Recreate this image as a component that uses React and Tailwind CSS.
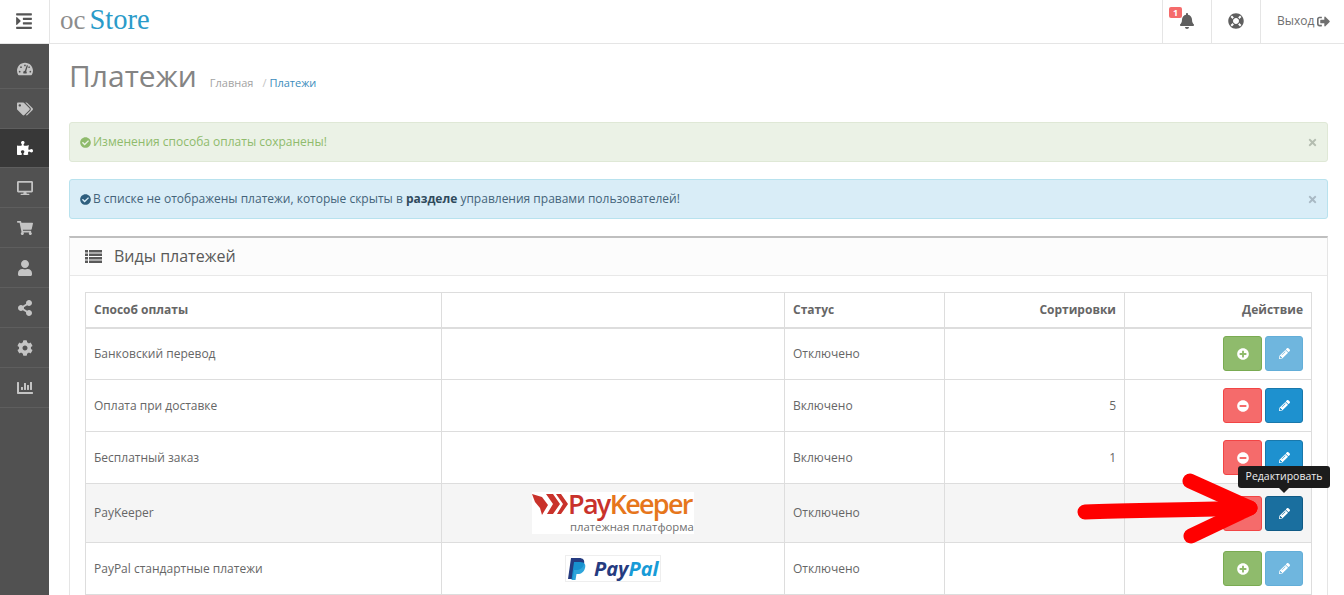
import React from 'react';
import {
  FaBell, FaChartBar, FaCheckCircle, FaCog, FaDesktop, FaIndent, FaLifeRing,
  FaMinusCircle, FaPencilAlt, FaPlusCircle, FaPuzzlePiece, FaShareAlt, FaShoppingCart,
  FaSignOutAlt, FaTachometerAlt, FaTags, FaUser, FaTimes,
} from 'react-icons/fa';

const menu = [
  { icon: FaTachometerAlt, cls: 'h-[45px] pt-[5px]' },
  { icon: FaTags, cls: 'h-[40px]' },
  { icon: FaPuzzlePiece, cls: 'h-[39px]', active: true },
  { icon: FaDesktop, cls: 'h-[40px]' },
  { icon: FaShoppingCart, cls: 'h-[40px]' },
  { icon: FaUser, cls: 'h-[40px]' },
  { icon: FaShareAlt, cls: 'h-[40px]' },
  { icon: FaCog, cls: 'h-[40px]' },
  { icon: FaChartBar, cls: 'h-[40px]' },
];

const rows = [
  { name: 'Банковский перевод', status: 'Отключено', sort: '', on: false },
  { name: 'Оплата при доставке', status: 'Включено', sort: '5', on: true },
  { name: 'Бесплатный заказ', status: 'Включено', sort: '1', on: true },
  { name: 'PayKeeper', status: 'Отключено', sort: '', on: false, logo: 'paykeeper', hover: true },
  { name: 'PayPal стандартные платежи', status: 'Отключено', sort: '', on: false, logo: 'paypal' },
];

function PayKeeperLogo() {
  return (
    <div className="mx-auto flex h-[42px] w-[162px] flex-col bg-white">
      <div className="flex h-[26px] items-center">
        <svg width="36" height="24" viewBox="0 0 36 24" className="shrink-0">
          <path d="M0 1 L10 4 L16 12 L10 22 L8 15 L3 9 Z" fill="#c9322b" />
          <path d="M14 1 L21 1 L28 11 L21 21 L15 21 L21 11 Z" fill="#c9322b" />
          <path d="M24 1 L29 1 L36 11 L29 21 L25 21 L31 11 Z" fill="#c9322b" />
        </svg>
        <span className="pb-[2px] font-['Open_Sans',sans-serif] text-[27px] leading-[24px] font-semibold tracking-[-1.7px] whitespace-nowrap">
          <span className="text-[#c9322b]">Pay</span>
          <span className="text-[#e6761c]">Keeper</span>
        </span>
      </div>
      <span className="mt-[2px] ml-[38px] text-[11.3px] leading-[13px] whitespace-nowrap text-[#6f6f6f]">платежная платформа</span>
    </div>
  );
}

function PayPalLogo() {
  return (
    <div className="mx-auto flex h-[27px] w-[96px] items-center border border-[#eeeeee] bg-white pl-[2px]">
      <svg width="18" height="24" viewBox="0 0 18 24" className="shrink-0">
        <path d="M3 1 H11 C15 1 17 3 16 7 C15 11 12 13 8 13 H6 L5 22 H0 Z" fill="#253b80" />
        <path d="M6 5 H12 C17 5 18 8 17 11 C16 15 13 17 10 17 H8.5 L7.5 23 H3.5 Z" fill="#179bd7" opacity="0.9" />
      </svg>
      <span className="ml-[8px] font-['Open_Sans',sans-serif] text-[20px] leading-none font-bold italic whitespace-nowrap">
        <span className="text-[#253b80]">Pay</span>
        <span className="text-[#179bd7]">Pal</span>
      </span>
    </div>
  );
}

function ListIcon() {
  return (
    <svg width="17" height="13" viewBox="0 0 17 13" fill="#595959" className="shrink-0">
      <rect x="0" y="0" width="3" height="2.5" />
      <rect x="4" y="0" width="13" height="2.5" />
      <rect x="0" y="3.5" width="3" height="2.5" />
      <rect x="4" y="3.5" width="13" height="2.5" />
      <rect x="0" y="7" width="3" height="2.5" />
      <rect x="4" y="7" width="13" height="2.5" />
      <rect x="0" y="10.5" width="3" height="2.5" />
      <rect x="4" y="10.5" width="13" height="2.5" />
    </svg>
  );
}

function ActionButtons({ on, hover }) {
  return (
    <div className="flex justify-end gap-[3px]">
      {on || hover ? (
        <button className="flex h-[35px] w-[39px] items-center justify-center rounded-[3px] border border-[#f24545] bg-[#f56b6b] text-[12px] text-white">
          <FaMinusCircle />
        </button>
      ) : (
        <button className="flex h-[35px] w-[39px] items-center justify-center rounded-[3px] border border-[#7aab52] bg-[#8fbb6c] text-[12px] text-white">
          <FaPlusCircle />
        </button>
      )}
      {hover ? (
        <button className="flex h-[35px] w-[38px] items-center justify-center rounded-[3px] border border-[#0f5a85] bg-[#1a6f9f] text-[11px] text-white">
          <FaPencilAlt />
        </button>
      ) : on ? (
        <button className="flex h-[35px] w-[38px] items-center justify-center rounded-[3px] border border-[#1978ab] bg-[#1e91cf] text-[11px] text-white">
          <FaPencilAlt />
        </button>
      ) : (
        <button className="flex h-[35px] w-[38px] items-center justify-center rounded-[3px] border border-[#63aed8] bg-[#6fb6de] text-[11px] text-white">
          <FaPencilAlt />
        </button>
      )}
    </div>
  );
}

export default function App() {
  return (
    <div className="relative h-[595px] w-[1344px] overflow-hidden bg-white font-['Open_Sans',sans-serif] text-[12px] text-[#666666]">
      {/* Header */}
      <header className="flex h-[44px] items-stretch border-b border-[#e5e5e5] bg-white">
        <div className="flex w-[50px] items-center justify-center border-r border-[#e5e5e5] pr-[1px] pb-[2px] text-[18px] text-[#555555]">
          <FaIndent />
        </div>
        <div className="ml-[10px] flex items-center pb-[2px] font-['Liberation_Serif',serif] leading-none">
          <span className="text-[27px] text-[#8c8c8c]">oc</span>
          <span className="ml-[4px] text-[28.5px] text-[#2a9bc9]">Store</span>
        </div>
        <div className="ml-auto flex">
          <div className="relative flex w-[49px] items-center justify-center border-l border-[#e5e5e5] pb-[1px] text-[16px] text-[#5f5f5f]">
            <FaBell />
            <span className="absolute top-[7px] left-[6px] flex h-[11px] w-[13px] items-center justify-center rounded-[2px] bg-[#f56b6b] text-[9px] font-bold text-white">1</span>
          </div>
          <div className="flex w-[49px] items-center justify-center border-l border-[#e5e5e5] pb-[1px] text-[16px] text-[#5f5f5f]">
            <FaLifeRing />
          </div>
          <div className="flex w-[84px] items-center gap-[3px] border-l border-[#e5e5e5] pb-[1px] pl-[16px] text-[#6f6f6f]">
            Выход <FaSignOutAlt className="text-[13px]" />
          </div>
        </div>
      </header>

      <div className="flex h-[551px]">
        {/* Sidebar */}
        <aside className="w-[49px] shrink-0 bg-[#515151]">
          {menu.map((item, i) => {
            const Icon = item.icon;
            return (
              <div
                key={i}
                className={`flex ${item.cls} items-center justify-center border-b border-[#5e5e5e] text-[16px] ${item.active ? 'bg-[#383838] text-white' : 'text-[#c4c4c4]'}`}
              >
                <Icon />
              </div>
            );
          })}
        </aside>

        {/* Main */}
        <main className="min-w-0 flex-1 pr-[16px] pl-[20px]">
          <div className="flex h-[78px] items-baseline pt-[11px]">
            <h1 className="text-[30px] leading-[42px] font-normal text-[#848484]">Платежи</h1>
            <span className="ml-[13px] text-[11px] text-[#a3a3a3]">Главная</span>
            <span className="ml-[9px] text-[11px] text-[#c4c4c4]">/</span>
            <span className="ml-[3px] text-[11px] text-[#3c8dbc]">Платежи</span>
          </div>

          <div className="flex h-[40px] items-center justify-between rounded-[3px] border border-[#dfe8d6] bg-[#ebf2e6] pr-[9px] pl-[10px] text-[#8fbb6c]">
            <span className="flex items-center gap-[2px]"><FaCheckCircle className="text-[11px]" /> Изменения способа оплаты сохранены!</span>
            <FaTimes className="text-[11px] text-[#b4bdb0]" />
          </div>

          <div className="mt-[17px] flex h-[40px] items-center justify-between rounded-[3px] border border-[#b8e2ee] bg-[#d9edf7] pr-[9px] pl-[10px] text-[#44647a]">
            <span className="flex items-center gap-[2px]">
              <FaCheckCircle className="text-[11px] text-[#2f5f7e]" />
              <span>В списке не отображены платежи, которые скрыты в <b className="text-[#2f4a5c]">разделе</b> управления правами пользователей!</span>
            </span>
            <FaTimes className="text-[11px] text-[#a9b9c4]" />
          </div>

          {/* Panel */}
          <section className="mt-[17px] border border-t-[2px] border-[#e5e5e5] border-t-[#bfbfbf]">
            <div className="flex h-[38px] items-center border-b border-[#e8e8e8] bg-[#fcfcfc] pb-[1px] pl-[15px] text-[16px] leading-none text-[#595959]">
              <ListIcon />
              <span className="ml-[12px]">Виды платежей</span>
            </div>
            <div className="px-[15px] pt-[16px]">
              <table className="w-[1227px] table-fixed border-collapse">
                <thead>
                  <tr className="h-[35px] border-b-[2px] border-[#dddddd] font-bold">
                    <th className="w-[356px] border border-b-[2px] border-[#dddddd] px-[8px] text-left font-bold">Способ оплаты</th>
                    <th className="w-[343px] border border-b-[2px] border-[#dddddd] px-[8px]"></th>
                    <th className="w-[160px] border border-b-[2px] border-[#dddddd] px-[8px] text-left font-bold">Статус</th>
                    <th className="w-[180px] border border-b-[2px] border-[#dddddd] px-[8px] text-right font-bold">Сортировки</th>
                    <th className="border border-b-[2px] border-[#dddddd] px-[8px] text-right font-bold">Действие</th>
                  </tr>
                </thead>
                <tbody>
                  {rows.map((row) => (
                    <tr key={row.name} className={row.hover ? 'h-[59px] bg-[#f5f5f5]' : 'h-[52px]'}>
                      <td className="border border-[#dddddd] px-[8px]">{row.name}</td>
                      <td className="border border-[#dddddd] px-[8px]">
                        {row.logo === 'paykeeper' && <PayKeeperLogo />}
                        {row.logo === 'paypal' && <PayPalLogo />}
                      </td>
                      <td className="border border-[#dddddd] px-[8px]">{row.status}</td>
                      <td className="border border-[#dddddd] px-[8px] text-right">{row.sort}</td>
                      <td className="border border-[#dddddd] px-[8px]"><ActionButtons on={row.on} hover={row.hover} /></td>
                    </tr>
                  ))}
                </tbody>
              </table>
            </div>
          </section>
        </main>
      </div>

      {/* Tooltip over the hovered edit button */}
      <div className="absolute top-[466px] left-[1238px] flex h-[22px] w-[92px] items-center justify-center rounded-[3px] bg-[#1c1c1c] text-[10.5px] text-[#eeeeee]">
        Редактировать
        <span className="absolute top-full left-[41px] h-0 w-0 border-x-[5px] border-t-[5px] border-x-transparent border-t-[#1c1c1c]"></span>
      </div>

      {/* Red annotation arrow */}
      <svg className="absolute top-0 left-0" width="1344" height="595" fill="none" stroke="#ff0000" strokeWidth="15" strokeLinecap="round" strokeLinejoin="round">
        <path d="M1085 512 C1130 510 1190 510 1250 508" />
        <path d="M1190 481 L1250 508 L1191 536" />
      </svg>
    </div>
  );
}
